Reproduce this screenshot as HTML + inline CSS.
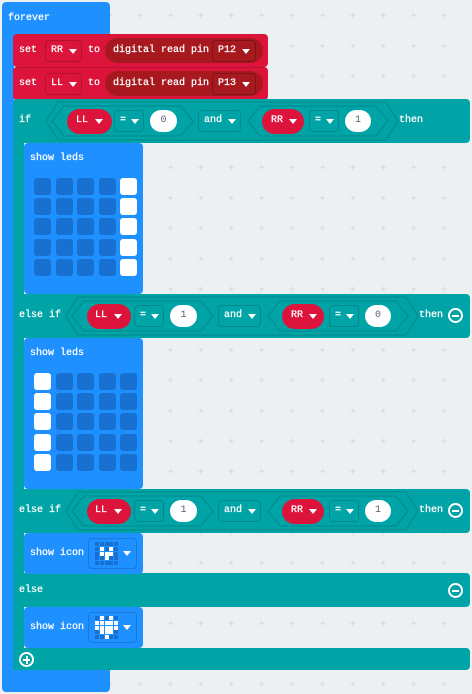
<!DOCTYPE html>
<html><head><meta charset="utf-8"><style>
body{margin:0;width:472px;height:694px;overflow:hidden;background:#ecf0f1;position:relative;font-family:"Liberation Mono",monospace;font-size:10px;font-weight:normal;color:#fff}
div{position:absolute;box-sizing:border-box}
.t{line-height:14px;white-space:nowrap;-webkit-text-stroke:0.25px #fff}
.blue{background:#1e90ff}
.red{background:#dc143c}
.teal{background:#00a4a6}
.pill{border-radius:12px;height:24px}
.dd{border:1px solid rgba(0,0,0,0.18);border-radius:4px;height:22px}
.tri{width:0;height:0;border-left:4px solid transparent;border-right:4px solid transparent;border-top:5px solid #fff}
.num{background:#fff;border-radius:11px;height:22px;color:#575e75;text-align:center;line-height:22px;font-weight:normal}
.led{width:17px;height:17px;border-radius:3px;background:#1870d0}
.on{background:#fff}
.ic{width:4px;height:4px;background:#1870d0}
.ic.on{background:#fff}
.circ{width:15px;height:15px;border:2px solid #fff;border-radius:50%}
</style></head><body>
<svg width="472" height="694" style="position:absolute;left:0;top:0">
<defs><pattern id="p" x="3" y="0" width="30.4" height="30.4" patternUnits="userSpaceOnUse"><path d="M15.4 13v5M13 15.4h5" stroke="#d6dbdd" stroke-width="1"/></pattern></defs>
<rect width="472" height="694" fill="url(#p)"/>
</svg>

<div class="blue" style="left:2px;top:2px;width:108px;height:34px;border-radius:4px 4px 0 0"></div>
<div class="blue" style="left:2px;top:30px;width:12px;height:650px"></div>
<div class="blue" style="left:2px;top:668px;width:108px;height:24px;border-radius:0 0 4px 4px"></div>
<div class="t" style="left:8px;top:12px">forever</div>

<div class="red" style="left:13px;top:34px;width:255px;height:33px;border-radius:4px"></div>
<div class="t" style="left:19px;top:44px">set</div>
<div class="dd" style="left:45px;top:40px;width:37px"></div>
<div class="t" style="left:51px;top:44px">RR</div><div class="tri" style="left:69px;top:49px"></div>
<div class="t" style="left:88px;top:44px">to</div>
<div class="pill" style="left:105px;top:38px;width:158px;height:25px;background:#a7191f;border-radius:13px"></div>
<div class="t" style="left:113px;top:44px">digital read pin</div>
<div class="dd" style="left:212px;top:40px;width:44px;border-color:rgba(0,0,0,0.25)"></div>
<div class="t" style="left:218px;top:44px">P12</div><div class="tri" style="left:242px;top:49px"></div>

<div class="red" style="left:13px;top:67px;width:255px;height:33px;border-radius:4px;border-top:1px solid rgba(0,0,0,0.15)"></div>
<div class="t" style="left:19px;top:77px">set</div>
<div class="dd" style="left:45px;top:73px;width:37px"></div>
<div class="t" style="left:51px;top:77px">LL</div><div class="tri" style="left:69px;top:82px"></div>
<div class="t" style="left:88px;top:77px">to</div>
<div class="pill" style="left:105px;top:71px;width:158px;height:25px;background:#a7191f;border-radius:13px"></div>
<div class="t" style="left:113px;top:77px">digital read pin</div>
<div class="dd" style="left:212px;top:73px;width:44px;border-color:rgba(0,0,0,0.25)"></div>
<div class="t" style="left:218px;top:77px">P13</div><div class="tri" style="left:242px;top:82px"></div>

<div class="teal" style="left:13px;top:99px;width:457px;height:44px;border-radius:4px 4px 4px 0"></div>
<div class="teal" style="left:13px;top:140px;width:11px;height:530px"></div>
<div class="teal" style="left:13px;top:294px;width:457px;height:44px;border-radius:0 4px 4px 0"></div>
<div class="teal" style="left:13px;top:489px;width:457px;height:44px;border-radius:0 4px 4px 0"></div>
<div class="teal" style="left:13px;top:573px;width:457px;height:34px;border-radius:0 4px 4px 0"></div>
<div class="teal" style="left:13px;top:648px;width:457px;height:22px;border-radius:0 4px 4px 4px"></div>

<svg width="472" height="694" style="position:absolute;left:0;top:0">
<g fill="none" stroke="#008e90" stroke-width="1.3">
<polygon points="58,102 386,102 398,121 386,140 58,140 46,121"/>
<polygon points="64,106 181,106 193,121 181,136 64,136 52,121"/>
<polygon points="260,106 376,106 388,121 376,136 260,136 248,121"/>
<polygon points="78,297 406,297 418,316 406,335 78,335 66,316"/>
<polygon points="84,301 201,301 213,316 201,331 84,331 72,316"/>
<polygon points="280,301 396,301 408,316 396,331 280,331 268,316"/>
<polygon points="78,492 406,492 418,511 406,530 78,530 66,511"/>
<polygon points="84,496 201,496 213,511 201,526 84,526 72,511"/>
<polygon points="280,496 396,496 408,511 396,526 280,526 268,511"/>
</g></svg>

<div class="t" style="left:19px;top:114px">if</div>
<div class="pill red" style="left:67px;top:109px;width:45px;height:25px;border-radius:13px"></div>
<div class="t" style="left:76px;top:114px">LL</div><div class="tri" style="left:95px;top:119px"></div>
<div class="dd" style="left:114px;top:110px;width:30px;border-color:#008a8c"></div>
<div class="t" style="left:120px;top:114px">=</div><div class="tri" style="left:131px;top:119px"></div>
<div class="num" style="left:150px;top:110px;width:27px">0</div>
<div class="dd" style="left:198px;top:110px;width:43px;border-color:#008a8c"></div>
<div class="t" style="left:204px;top:114px">and</div><div class="tri" style="left:228px;top:119px"></div>
<div class="pill red" style="left:262px;top:109px;width:42px;height:25px;border-radius:13px"></div>
<div class="t" style="left:271px;top:114px">RR</div><div class="tri" style="left:289px;top:119px"></div>
<div class="dd" style="left:309px;top:110px;width:30px;border-color:#008a8c"></div>
<div class="t" style="left:315px;top:114px">=</div><div class="tri" style="left:326px;top:119px"></div>
<div class="num" style="left:345px;top:110px;width:26px">1</div>
<div class="t" style="left:399px;top:114px">then</div>

<div class="blue" style="left:24px;top:143px;width:119px;height:151px;border-radius:4px"></div>
<div class="t" style="left:30px;top:152px">show leds</div>

<div class="t" style="left:19px;top:309px">else if</div>
<div class="pill red" style="left:87px;top:304px;width:44px;height:25px;border-radius:13px"></div>
<div class="t" style="left:95px;top:309px">LL</div><div class="tri" style="left:114px;top:314px"></div>
<div class="dd" style="left:134px;top:305px;width:30px;border-color:#008a8c"></div>
<div class="t" style="left:140px;top:309px">=</div><div class="tri" style="left:151px;top:314px"></div>
<div class="num" style="left:170px;top:305px;width:27px">1</div>
<div class="dd" style="left:218px;top:305px;width:43px;border-color:#008a8c"></div>
<div class="t" style="left:224px;top:309px">and</div><div class="tri" style="left:248px;top:314px"></div>
<div class="pill red" style="left:282px;top:304px;width:42px;height:25px;border-radius:13px"></div>
<div class="t" style="left:291px;top:309px">RR</div><div class="tri" style="left:309px;top:314px"></div>
<div class="dd" style="left:329px;top:305px;width:30px;border-color:#008a8c"></div>
<div class="t" style="left:335px;top:309px">=</div><div class="tri" style="left:346px;top:314px"></div>
<div class="num" style="left:365px;top:305px;width:26px">0</div>
<div class="t" style="left:419px;top:309px">then</div>
<div class="circ" style="left:448px;top:308px"></div><div style="left:452px;top:315px;width:7px;height:2px;background:#fff"></div>

<div class="blue" style="left:24px;top:338px;width:119px;height:151px;border-radius:4px"></div>
<div class="t" style="left:30px;top:347px">show leds</div>

<div class="t" style="left:19px;top:504px">else if</div>
<div class="pill red" style="left:87px;top:499px;width:44px;height:25px;border-radius:13px"></div>
<div class="t" style="left:95px;top:504px">LL</div><div class="tri" style="left:114px;top:509px"></div>
<div class="dd" style="left:134px;top:500px;width:30px;border-color:#008a8c"></div>
<div class="t" style="left:140px;top:504px">=</div><div class="tri" style="left:151px;top:509px"></div>
<div class="num" style="left:170px;top:500px;width:27px">1</div>
<div class="dd" style="left:218px;top:500px;width:43px;border-color:#008a8c"></div>
<div class="t" style="left:224px;top:504px">and</div><div class="tri" style="left:248px;top:509px"></div>
<div class="pill red" style="left:282px;top:499px;width:42px;height:25px;border-radius:13px"></div>
<div class="t" style="left:291px;top:504px">RR</div><div class="tri" style="left:309px;top:509px"></div>
<div class="dd" style="left:329px;top:500px;width:30px;border-color:#008a8c"></div>
<div class="t" style="left:335px;top:504px">=</div><div class="tri" style="left:346px;top:509px"></div>
<div class="num" style="left:365px;top:500px;width:26px">1</div>
<div class="t" style="left:419px;top:504px">then</div>
<div class="circ" style="left:448px;top:503px"></div><div style="left:452px;top:510px;width:7px;height:2px;background:#fff"></div>

<div class="blue" style="left:24px;top:533px;width:119px;height:41px;border-radius:4px"></div>
<div class="t" style="left:30px;top:547px">show icon</div>
<div class="dd" style="left:88px;top:538px;width:49px;height:31px;border-color:rgba(0,0,0,0.15)"></div>
<div class="tri" style="left:123px;top:551px"></div>

<div class="t" style="left:19px;top:584px">else</div>
<div class="circ" style="left:448px;top:583px"></div><div style="left:452px;top:590px;width:7px;height:2px;background:#fff"></div>

<div class="blue" style="left:24px;top:607px;width:119px;height:41px;border-radius:4px"></div>
<div class="t" style="left:30px;top:621px">show icon</div>
<div class="dd" style="left:88px;top:612px;width:49px;height:31px;border-color:rgba(0,0,0,0.15)"></div>
<div class="tri" style="left:123px;top:625px"></div>

<div class="circ" style="left:19px;top:652px"></div>
<div style="left:23px;top:659px;width:7px;height:2px;background:#fff"></div>
<div style="left:25.5px;top:656px;width:2px;height:8px;background:#fff"></div>

<div id="g"></div>
<script>
function leds(x0,y0,col){var xs=[34,56,77,99,120],ys=[0,20,40,61,81],h='';
for(var r=0;r<5;r++)for(var c=0;c<5;c++)h+='<div class="led'+(c==col?' on':'')+'" style="left:'+xs[c]+'px;top:'+(y0+ys[r])+'px"></div>';return h;}
function icon(x0,y0,p){var h='';for(var r=0;r<5;r++)for(var c=0;c<5;c++)h+='<div class="ic'+(p[r][c]=='#'?' on':'')+'" style="left:'+(x0+c*4.8)+'px;top:'+(y0+r*4.8)+'px"></div>';return h;}
document.getElementById('g').outerHTML=leds(0,178,4)+leds(0,373,0)
+icon(95,542,['.....','.#.#.','.###.','..#..','.....'])
+icon(95,616,['.#.#.','#####','#####','.###.','..#..']);
</script>
</body></html>
